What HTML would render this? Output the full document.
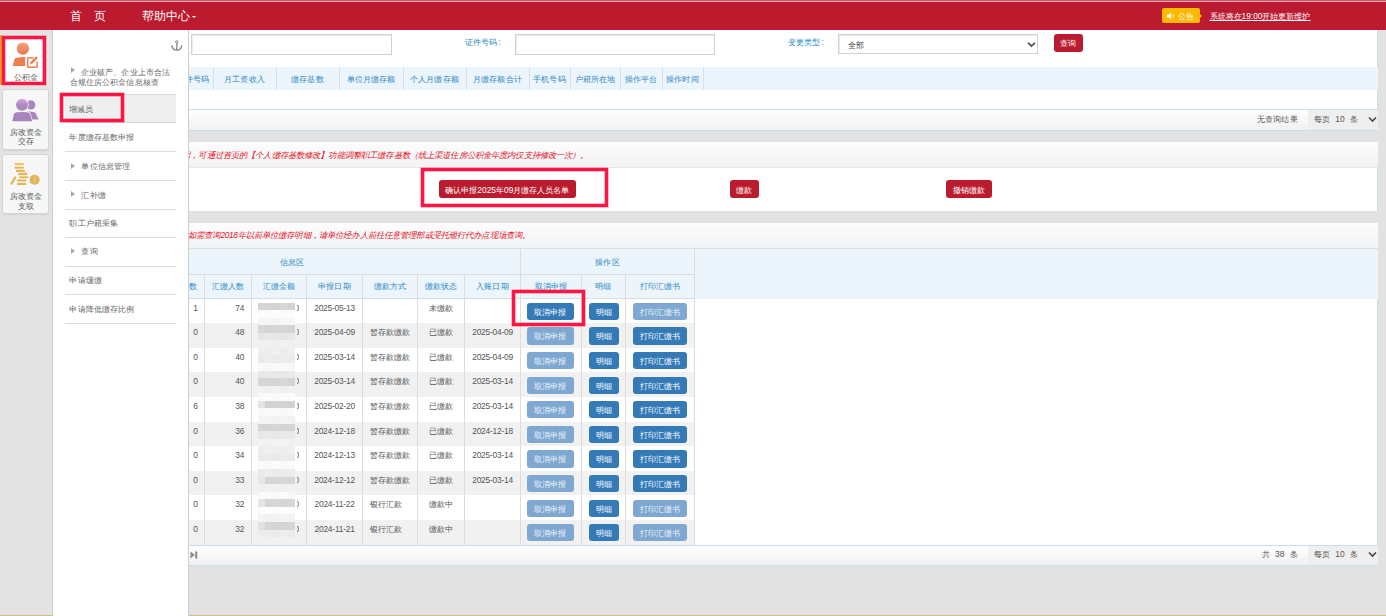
<!DOCTYPE html><html><head><meta charset="utf-8"><style>html,body{margin:0;padding:0;}
body{width:1386px;height:616px;overflow:hidden;position:relative;background:#e2e2e2;font-family:"Liberation Sans",sans-serif;}
.a{position:absolute;box-sizing:border-box;}
.t{letter-spacing:0.13px;white-space:nowrap;font-size:8.4px;line-height:12px;color:#555;}
.d{white-space:nowrap;font-size:8.4px;line-height:12px;color:#555;}
.h{letter-spacing:0.13px;white-space:nowrap;font-size:8.4px;line-height:12px;color:#2b8bc6;text-align:center;}
.bb{background:#337ab7;border-radius:3px;color:#fff;font-size:8.4px;line-height:19px;text-align:center;white-space:nowrap;}
.bb.dis{background:#7ea8d1;color:#eef3f9;}
.rb{background:#bb1b2e;border-radius:3px;color:#fff;font-size:8.4px;line-height:20.2px;text-align:center;white-space:nowrap;}
.sep{background:#e1e1e1;height:1px;}
.notice{letter-spacing:0.13px;color:#e8101a;font-style:italic;font-size:8.4px;white-space:nowrap;line-height:12px;}
.anno{border:3px solid #fe1543;box-shadow:0 0 0 0.5px rgba(254,21,67,0.6), inset 0 0 0 0.5px rgba(254,21,67,0.6);}
.pg{background:linear-gradient(#ffffff,#f1f1f1);border-top:1px solid #c7dfeb;border-bottom:1px solid #c7dfeb;}
.inp{background:#fff;border:1px solid #d2d2d2;border-radius:0;box-shadow:inset 1px 1px 0 #ececec;}
</style></head><body>
<!-- top line + header -->
<div class="a" style="left:0;top:0;width:1386px;height:1px;background:#c9566a"></div>
<div class="a" style="left:0;top:1px;width:1386px;height:1px;background:#e6aab3"></div>
<div class="a" style="left:0;top:2px;width:1386px;height:28px;background:#bc1a2e"></div>
<div class="a" style="left:70px;top:8px;font-size:12.4px;line-height:16px;color:#fff;white-space:nowrap">首</div>
<div class="a" style="left:94px;top:8px;font-size:12.4px;line-height:16px;color:#fff;white-space:nowrap">页</div>
<div class="a" style="left:142px;top:8px;font-size:12.4px;line-height:16px;color:#fff;white-space:nowrap">帮助中心</div>
<div class="a" style="left:192px;top:15.8px;width:0;height:0;border-left:2.3px solid transparent;border-right:2.3px solid transparent;border-top:2.3px solid #fff"></div>
<!-- notice badge -->
<div class="a" style="left:1162px;top:8px;width:38px;height:15px;background:#fdb800;border-radius:2px"></div>
<div class="a" style="left:1200px;top:13.5px;width:0;height:0;border-top:2px solid transparent;border-bottom:2px solid transparent;border-left:2.5px solid #fdb800"></div>
<svg class="a" style="left:1166px;top:11px" width="10" height="10" viewBox="0 0 10 10"><path d="M1 3.5h1.8L5 1.8v6.4L2.8 6.5H1z" fill="#fff"/><path d="M6.6 3.2a2.4 2.4 0 0 1 0 3.6" stroke="#fff" stroke-width="0.8" fill="none"/></svg>
<div class="a" style="left:1178px;top:9.5px;font-size:8.4px;line-height:12px;color:#fff;white-space:nowrap">公告</div>
<div class="a" style="left:1209.5px;top:10px;font-size:8.4px;line-height:12px;color:#fff;white-space:nowrap;text-decoration:underline">系统将在19:00开始更新维护</div>

<!-- sidebar -->
<div class="a" style="left:0;top:30px;width:53px;height:586px;background:#e3e3e3;border-right:1px solid #cfcfcf"></div>
<div class="a" style="left:0;top:36px;width:51px;height:50px;background:linear-gradient(90deg,#fff 0,#fff 45px,#f0f0f0 46px,#e2e2e2 51px)"></div>
<div class="a" style="left:0;top:35px;width:2px;height:50px;background:#f0a21a"></div>
<div class="a" style="left:2px;top:89px;width:47px;height:61px;background:#f7f7f7;border:1px solid #d6d6d6;border-radius:3px;box-shadow:0 1px 1px rgba(0,0,0,0.08)"></div>
<div class="a" style="left:2px;top:154px;width:47px;height:60px;background:#f7f7f7;border:1px solid #d6d6d6;border-radius:3px;box-shadow:0 1px 1px rgba(0,0,0,0.08)"></div>
<!-- icon 1 person edit -->
<svg class="a" style="left:10px;top:40px" width="30" height="30" viewBox="0 0 30 30">
 <defs><linearGradient id="og" x1="0" y1="0" x2="0" y2="1"><stop offset="0" stop-color="#f5a27e"/><stop offset="1" stop-color="#eb7650"/></linearGradient>
 <linearGradient id="pg" x1="0" y1="0" x2="0" y2="1"><stop offset="0" stop-color="#dcaae8"/><stop offset="0.5" stop-color="#ad8bc2"/><stop offset="1" stop-color="#a886bd"/></linearGradient></defs>
 <circle cx="12.9" cy="8.6" r="6.2" fill="url(#og)"/>
 <path d="M2.7 26 L4.5 19.2 Q4.9 18 6.4 17.8 L15.1 16.8 L15.1 26 Z" fill="#ee7d52"/>
 <path d="M23.6 17.7 H18.6 Q17.7 17.7 17.7 18.6 V26.4 Q17.7 27.3 18.6 27.3 H26.2 Q27.1 27.3 27.1 26.4 V21.4" fill="none" stroke="#ee7d52" stroke-width="1.5"/>
 <path d="M20 24.4 L20.7 21.7 L26.1 16.3 L27.9 18.1 L22.5 23.5 Z" fill="#ee7d52"/>
</svg>
<div class="a t" style="left:13.5px;top:71px;color:#555">公积金</div>
<!-- icon 2 persons -->
<svg class="a" style="left:8px;top:94px" width="34" height="32" viewBox="0 0 34 32">
 <circle cx="22.8" cy="10.9" r="4.6" fill="#a987bf"/>
 <path d="M19.5 17.6 Q26 17.3 27.6 19.2 L30.7 25.5 L23 25.5 Z" fill="#a987bf"/>
 <circle cx="14" cy="10.7" r="6.7" fill="#f7f7f7"/>
 <circle cx="14" cy="10.7" r="6" fill="url(#pg)"/>
 <path d="M3.4 28 L5.4 19.5 Q6 17.8 9 17.6 Q14 17.1 19 17.6 Q22 17.8 22.6 19.5 L25 28 Z" fill="#f7f7f7"/>
 <path d="M4.2 27.3 L6 19.9 Q6.5 18.5 9 18.3 Q14 17.8 19 18.3 Q21.5 18.5 22 19.9 L24.2 27.3 Z" fill="#a886bd"/>
</svg>
<div class="a t" style="left:9.6px;top:125.5px;color:#555">房改资金</div>
<div class="a t" style="left:17.7px;top:134.5px;color:#555">交存</div>
<!-- icon 3 coins -->
<svg class="a" style="left:8px;top:160px" width="34" height="28" viewBox="0 0 34 28">
 <g fill="#e3b456">
  <rect x="6.4" y="3.1" width="9.6" height="2" rx="1" fill="#f0c66c"/>
  <rect x="6.4" y="6.7" width="9.6" height="2" rx="1"/>
  <rect x="7.7" y="9.9" width="9.4" height="2" rx="1"/>
  <rect x="10" y="13.1" width="9.4" height="2" rx="1"/>
  <rect x="11.1" y="16.3" width="9.2" height="2" rx="1"/>
  <rect x="8.9" y="19.5" width="9.4" height="2" rx="1"/>
  <rect x="8.9" y="23" width="9.4" height="2" rx="1"/>
  <path d="M3.4 23.6 L7.3 17.5" stroke="#e3b456" stroke-width="2.3" stroke-linecap="round"/>
  <circle cx="26.6" cy="19.8" r="5"/>
 </g>
 <g fill="#f4e6c4" opacity="0.8">
  <rect x="7" y="5.2" width="8.6" height="1.4"/>
  <rect x="8" y="8.7" width="8.6" height="1.2"/>
  <rect x="10.5" y="11.9" width="8.6" height="1.2"/>
  <rect x="11.5" y="15.1" width="8.6" height="1.2"/>
  <rect x="9.5" y="21.5" width="8.6" height="1.4"/>
 </g>
 <path d="M26.8 16.6 L27.4 17.8 L26.2 19.4 L27.4 21 L26.6 22.8" stroke="#f1ddb0" stroke-width="0.8" fill="none"/>
</svg>
<div class="a t" style="left:9.6px;top:190px;color:#555">房改资金</div>
<div class="a t" style="left:17.7px;top:199.5px;color:#555">支取</div>

<!-- main panel 1 -->
<div class="a" style="left:188px;top:30px;width:1190px;height:101px;background:#fff;border-right:1px solid #c7dfeb"></div>
<div class="a inp" style="left:191px;top:34px;width:201px;height:21px"></div>
<div class="a h" style="left:464.5px;top:35.7px;text-align:left">证件号码<span style="margin-left:1.2px">:</span></div>
<div class="a inp" style="left:515px;top:34px;width:200px;height:21px"></div>
<div class="a h" style="left:787.8px;top:35.7px;text-align:left">变更类型<span style="margin-left:1.2px">:</span></div>
<div class="a inp" style="left:838px;top:34px;width:200px;height:20px"></div>
<div class="a t" style="left:848px;top:38.6px;color:#444">全部</div>
<svg class="a" style="left:1027px;top:40.5px" width="9" height="7" viewBox="0 0 9 7"><path d="M1 1.8 L4.5 5 L8 1.8" stroke="#555" stroke-width="1.7" fill="none"/></svg>
<div class="a rb" style="left:1054px;top:34px;width:28.6px;height:18px;line-height:19.5px">查询</div>
<!-- header row -->
<div class="a" style="left:188px;top:67px;width:1190px;height:23px;background:#ecf4fc"></div>
<div id="hdr1"></div>
<div class="a" style="left:188px;top:109.3px;width:1190px;height:21.5px" ></div>
<div class="a pg" style="left:188px;top:109.3px;width:1190px;height:21.6px"></div>
<div class="a t" style="left:1257px;top:112.6px;color:#555">无查询结果</div>
<div class="a" style="left:1308px;top:110.3px;width:70px;height:19.6px;background:#efefef"></div>
<div class="a t" style="left:1314px;top:112.6px;color:#555">每页&nbsp;&nbsp;10&nbsp;&nbsp;条</div>
<svg class="a" style="left:1367.5px;top:116px" width="9" height="7" viewBox="0 0 9 7"><path d="M1 1.5 L4.5 5 L8 1.5" stroke="#444" stroke-width="1.6" fill="none"/></svg>

<!-- panel 2 -->
<div class="a" style="left:188px;top:141.5px;width:1190px;height:69.5px;background:#fff;border-right:1px solid #c7dfeb"></div>
<div class="a" style="left:188px;top:141.5px;width:1190px;height:26.3px;background:linear-gradient(#fdfdfd,#f1f2f4);border-bottom:1px solid #e6e6e6"></div>
<div class="a notice" style="left:174px;top:148.5px">数据，可通过首页的【个人缴存基数修改】功能调整职工缴存基数（线上渠道住房公积金年度内仅支持修改一次）。</div>
<div class="a rb" style="left:439.1px;top:180.2px;width:136.5px;height:18.1px">确认申报2025年09月缴存人员名单</div>
<div class="a rb" style="left:730.2px;top:180.1px;width:28.6px;height:18.4px">缴款</div>
<div class="a rb" style="left:946px;top:180.1px;width:45.5px;height:18.4px">撤销缴款</div>
<div class="a anno" style="left:420.9px;top:168.3px;width:187.1px;height:38.4px"></div>

<!-- panel 3 -->
<div class="a" style="left:188px;top:222.5px;width:1190px;height:342.5px;background:#fff;border-right:1px solid #c7dfeb"></div>
<div class="a" style="left:188px;top:222.5px;width:1190px;height:26.3px;background:linear-gradient(#fdfdfd,#f1f2f4);border-bottom:1px solid #dedede"></div>
<div class="a notice" style="left:188px;top:229px">如需查询<span style="letter-spacing:-0.4px">2018</span>年以前单位缴存明细，请单位经办人前往任意管理部或受托银行代办点现场查询。</div>
<div class="a" style="left:188px;top:249.2px;width:1190px;height:49.4px;background:#ecf4fc"></div>
<div class="a" style="left:188px;top:274px;width:507px;height:1px;background:#dcdcdc"></div>
<div class="a" style="left:520px;top:249.2px;width:1px;height:25px;background:#dcdcdc"></div>
<div class="a" style="left:694px;top:249.2px;width:1px;height:25px;background:#dcdcdc"></div>
<div class="a" style="left:188px;top:298px;width:507px;height:1px;background:#dcdcdc"></div>
<div class="a h" style="left:192px;top:255.5px;width:200px">信息区</div>
<div class="a h" style="left:507.5px;top:255.5px;width:200px">操作区</div>

<div class="a pg" style="left:188px;top:544.6px;width:1190px;height:21px"></div>
<svg class="a" style="left:190px;top:550.5px" width="8" height="8" viewBox="0 0 8 8"><path d="M0.5 0.5 L4.8 4 L0.5 7.5 Z" fill="#888"/><rect x="5.2" y="0.5" width="2" height="7" fill="#888"/></svg>
<div class="a t" style="left:1262px;top:547.6px;color:#555">共&nbsp;&nbsp;38&nbsp;&nbsp;条</div>
<div class="a" style="left:1308px;top:545.6px;width:70px;height:18.6px;background:#efefef"></div>
<div class="a t" style="left:1314px;top:547.6px;color:#555">每页&nbsp;&nbsp;10&nbsp;&nbsp;条</div>
<svg class="a" style="left:1367.5px;top:551px" width="9" height="7" viewBox="0 0 9 7"><path d="M1 1.5 L4.5 5 L8 1.5" stroke="#444" stroke-width="1.6" fill="none"/></svg>
<div class="a" style="left:0;top:615px;width:1386px;height:1px;background:#d9bc8c"></div>

<div class="a " style="left:188px;top:323.2px;width:506.5px;height:24.6px;background:#f1f1f1"></div>
<div class="a " style="left:188px;top:372.4px;width:506.5px;height:24.6px;background:#f1f1f1"></div>
<div class="a " style="left:188px;top:421.6px;width:506.5px;height:24.6px;background:#f1f1f1"></div>
<div class="a " style="left:188px;top:470.8px;width:506.5px;height:24.6px;background:#f1f1f1"></div>
<div class="a " style="left:188px;top:520.0px;width:506.5px;height:24.6px;background:#f1f1f1"></div>
<div class="a d" style="left:180.5px;top:301.6px;width:30px;text-align:center;">1</div>
<div class="a d" style="left:204.5px;top:301.6px;width:40px;text-align:right">74</div>
<div class="a d" style="left:296.6px;top:301.6px;width:2.8px;overflow:hidden"><span style="margin-left:-2px">0</span></div>
<div class="a d" style="left:307.5px;top:301.6px;width:54px;text-align:center;letter-spacing:-0.2px;text-indent:0.2px">2025-05-13</div>
<div class="a d" style="left:418.0px;top:301.6px;width:46px;text-align:center;">未缴款</div>
<div class="a bb" style="left:527.1px;top:302.8px;width:46.8px;height:17.2px;">取消申报</div>
<div class="a bb" style="left:588.6px;top:302.8px;width:30px;height:17.2px;">明细</div>
<div class="a bb dis" style="left:633px;top:302.8px;width:54.2px;height:17.2px;">打印汇缴书</div>
<div class="a d" style="left:180.5px;top:326.20000000000005px;width:30px;text-align:center;">0</div>
<div class="a d" style="left:204.5px;top:326.20000000000005px;width:40px;text-align:right">48</div>
<div class="a d" style="left:296.6px;top:326.20000000000005px;width:2.8px;overflow:hidden"><span style="margin-left:-2px">0</span></div>
<div class="a d" style="left:307.5px;top:326.20000000000005px;width:54px;text-align:center;letter-spacing:-0.2px;text-indent:0.2px">2025-04-09</div>
<div class="a d" style="left:370px;top:326.20000000000005px;">暂存款缴款</div>
<div class="a d" style="left:418.0px;top:326.20000000000005px;width:46px;text-align:center;">已缴款</div>
<div class="a d" style="left:465.5px;top:326.20000000000005px;width:54px;text-align:center;letter-spacing:-0.2px;text-indent:0.2px">2025-04-09</div>
<div class="a bb dis" style="left:527.1px;top:327.4px;width:46.8px;height:17.2px;">取消申报</div>
<div class="a bb" style="left:588.6px;top:327.4px;width:30px;height:17.2px;">明细</div>
<div class="a bb" style="left:633px;top:327.4px;width:54.2px;height:17.2px;">打印汇缴书</div>
<div class="a d" style="left:180.5px;top:350.8px;width:30px;text-align:center;">0</div>
<div class="a d" style="left:204.5px;top:350.8px;width:40px;text-align:right">40</div>
<div class="a d" style="left:296.6px;top:350.8px;width:2.8px;overflow:hidden"><span style="margin-left:-2px">0</span></div>
<div class="a d" style="left:307.5px;top:350.8px;width:54px;text-align:center;letter-spacing:-0.2px;text-indent:0.2px">2025-03-14</div>
<div class="a d" style="left:370px;top:350.8px;">暂存款缴款</div>
<div class="a d" style="left:418.0px;top:350.8px;width:46px;text-align:center;">已缴款</div>
<div class="a d" style="left:465.5px;top:350.8px;width:54px;text-align:center;letter-spacing:-0.2px;text-indent:0.2px">2025-04-09</div>
<div class="a bb dis" style="left:527.1px;top:352.0px;width:46.8px;height:17.2px;">取消申报</div>
<div class="a bb" style="left:588.6px;top:352.0px;width:30px;height:17.2px;">明细</div>
<div class="a bb" style="left:633px;top:352.0px;width:54.2px;height:17.2px;">打印汇缴书</div>
<div class="a d" style="left:180.5px;top:375.40000000000003px;width:30px;text-align:center;">0</div>
<div class="a d" style="left:204.5px;top:375.40000000000003px;width:40px;text-align:right">40</div>
<div class="a d" style="left:296.6px;top:375.40000000000003px;width:2.8px;overflow:hidden"><span style="margin-left:-2px">0</span></div>
<div class="a d" style="left:307.5px;top:375.40000000000003px;width:54px;text-align:center;letter-spacing:-0.2px;text-indent:0.2px">2025-03-14</div>
<div class="a d" style="left:370px;top:375.40000000000003px;">暂存款缴款</div>
<div class="a d" style="left:418.0px;top:375.40000000000003px;width:46px;text-align:center;">已缴款</div>
<div class="a d" style="left:465.5px;top:375.40000000000003px;width:54px;text-align:center;letter-spacing:-0.2px;text-indent:0.2px">2025-03-14</div>
<div class="a bb dis" style="left:527.1px;top:376.6px;width:46.8px;height:17.2px;">取消申报</div>
<div class="a bb" style="left:588.6px;top:376.6px;width:30px;height:17.2px;">明细</div>
<div class="a bb" style="left:633px;top:376.6px;width:54.2px;height:17.2px;">打印汇缴书</div>
<div class="a d" style="left:180.5px;top:400.0px;width:30px;text-align:center;">6</div>
<div class="a d" style="left:204.5px;top:400.0px;width:40px;text-align:right">38</div>
<div class="a d" style="left:296.6px;top:400.0px;width:2.8px;overflow:hidden"><span style="margin-left:-2px">0</span></div>
<div class="a d" style="left:307.5px;top:400.0px;width:54px;text-align:center;letter-spacing:-0.2px;text-indent:0.2px">2025-02-20</div>
<div class="a d" style="left:370px;top:400.0px;">暂存款缴款</div>
<div class="a d" style="left:418.0px;top:400.0px;width:46px;text-align:center;">已缴款</div>
<div class="a d" style="left:465.5px;top:400.0px;width:54px;text-align:center;letter-spacing:-0.2px;text-indent:0.2px">2025-03-14</div>
<div class="a bb dis" style="left:527.1px;top:401.2px;width:46.8px;height:17.2px;">取消申报</div>
<div class="a bb" style="left:588.6px;top:401.2px;width:30px;height:17.2px;">明细</div>
<div class="a bb" style="left:633px;top:401.2px;width:54.2px;height:17.2px;">打印汇缴书</div>
<div class="a d" style="left:180.5px;top:424.6px;width:30px;text-align:center;">0</div>
<div class="a d" style="left:204.5px;top:424.6px;width:40px;text-align:right">36</div>
<div class="a d" style="left:296.6px;top:424.6px;width:2.8px;overflow:hidden"><span style="margin-left:-2px">0</span></div>
<div class="a d" style="left:307.5px;top:424.6px;width:54px;text-align:center;letter-spacing:-0.2px;text-indent:0.2px">2024-12-18</div>
<div class="a d" style="left:370px;top:424.6px;">暂存款缴款</div>
<div class="a d" style="left:418.0px;top:424.6px;width:46px;text-align:center;">已缴款</div>
<div class="a d" style="left:465.5px;top:424.6px;width:54px;text-align:center;letter-spacing:-0.2px;text-indent:0.2px">2024-12-18</div>
<div class="a bb dis" style="left:527.1px;top:425.8px;width:46.8px;height:17.2px;">取消申报</div>
<div class="a bb" style="left:588.6px;top:425.8px;width:30px;height:17.2px;">明细</div>
<div class="a bb" style="left:633px;top:425.8px;width:54.2px;height:17.2px;">打印汇缴书</div>
<div class="a d" style="left:180.5px;top:449.20000000000005px;width:30px;text-align:center;">0</div>
<div class="a d" style="left:204.5px;top:449.20000000000005px;width:40px;text-align:right">34</div>
<div class="a d" style="left:296.6px;top:449.20000000000005px;width:2.8px;overflow:hidden"><span style="margin-left:-2px">0</span></div>
<div class="a d" style="left:307.5px;top:449.20000000000005px;width:54px;text-align:center;letter-spacing:-0.2px;text-indent:0.2px">2024-12-13</div>
<div class="a d" style="left:370px;top:449.20000000000005px;">暂存款缴款</div>
<div class="a d" style="left:418.0px;top:449.20000000000005px;width:46px;text-align:center;">已缴款</div>
<div class="a d" style="left:465.5px;top:449.20000000000005px;width:54px;text-align:center;letter-spacing:-0.2px;text-indent:0.2px">2025-03-14</div>
<div class="a bb dis" style="left:527.1px;top:450.4px;width:46.8px;height:17.2px;">取消申报</div>
<div class="a bb" style="left:588.6px;top:450.4px;width:30px;height:17.2px;">明细</div>
<div class="a bb" style="left:633px;top:450.4px;width:54.2px;height:17.2px;">打印汇缴书</div>
<div class="a d" style="left:180.5px;top:473.80000000000007px;width:30px;text-align:center;">0</div>
<div class="a d" style="left:204.5px;top:473.80000000000007px;width:40px;text-align:right">33</div>
<div class="a d" style="left:296.6px;top:473.80000000000007px;width:2.8px;overflow:hidden"><span style="margin-left:-2px">0</span></div>
<div class="a d" style="left:307.5px;top:473.80000000000007px;width:54px;text-align:center;letter-spacing:-0.2px;text-indent:0.2px">2024-12-12</div>
<div class="a d" style="left:370px;top:473.80000000000007px;">暂存款缴款</div>
<div class="a d" style="left:418.0px;top:473.80000000000007px;width:46px;text-align:center;">已缴款</div>
<div class="a d" style="left:465.5px;top:473.80000000000007px;width:54px;text-align:center;letter-spacing:-0.2px;text-indent:0.2px">2025-03-14</div>
<div class="a bb dis" style="left:527.1px;top:475.0px;width:46.8px;height:17.2px;">取消申报</div>
<div class="a bb" style="left:588.6px;top:475.0px;width:30px;height:17.2px;">明细</div>
<div class="a bb" style="left:633px;top:475.0px;width:54.2px;height:17.2px;">打印汇缴书</div>
<div class="a d" style="left:180.5px;top:498.40000000000003px;width:30px;text-align:center;">0</div>
<div class="a d" style="left:204.5px;top:498.40000000000003px;width:40px;text-align:right">32</div>
<div class="a d" style="left:296.6px;top:498.40000000000003px;width:2.8px;overflow:hidden"><span style="margin-left:-2px">0</span></div>
<div class="a d" style="left:307.5px;top:498.40000000000003px;width:54px;text-align:center;letter-spacing:-0.2px;text-indent:0.2px">2024-11-22</div>
<div class="a d" style="left:370px;top:498.40000000000003px;">银行汇款</div>
<div class="a d" style="left:418.0px;top:498.40000000000003px;width:46px;text-align:center;">缴款中</div>
<div class="a bb dis" style="left:527.1px;top:499.6px;width:46.8px;height:17.2px;">取消申报</div>
<div class="a bb" style="left:588.6px;top:499.6px;width:30px;height:17.2px;">明细</div>
<div class="a bb dis" style="left:633px;top:499.6px;width:54.2px;height:17.2px;">打印汇缴书</div>
<div class="a d" style="left:180.5px;top:523.0px;width:30px;text-align:center;">0</div>
<div class="a d" style="left:204.5px;top:523.0px;width:40px;text-align:right">32</div>
<div class="a d" style="left:296.6px;top:523.0px;width:2.8px;overflow:hidden"><span style="margin-left:-2px">0</span></div>
<div class="a d" style="left:307.5px;top:523.0px;width:54px;text-align:center;letter-spacing:-0.2px;text-indent:0.2px">2024-11-21</div>
<div class="a d" style="left:370px;top:523.0px;">银行汇款</div>
<div class="a d" style="left:418.0px;top:523.0px;width:46px;text-align:center;">缴款中</div>
<div class="a bb dis" style="left:527.1px;top:524.2px;width:46.8px;height:17.2px;">取消申报</div>
<div class="a bb" style="left:588.6px;top:524.2px;width:30px;height:17.2px;">明细</div>
<div class="a bb dis" style="left:633px;top:524.2px;width:54.2px;height:17.2px;">打印汇缴书</div>
<div class="a " style="left:204px;top:274.3px;width:1px;height:270.3px;background:#dcdcdc"></div>
<div class="a " style="left:251px;top:274.3px;width:1px;height:270.3px;background:#dcdcdc"></div>
<div class="a " style="left:306px;top:274.3px;width:1px;height:270.3px;background:#dcdcdc"></div>
<div class="a " style="left:362px;top:274.3px;width:1px;height:270.3px;background:#dcdcdc"></div>
<div class="a " style="left:417px;top:274.3px;width:1px;height:270.3px;background:#dcdcdc"></div>
<div class="a " style="left:464px;top:274.3px;width:1px;height:270.3px;background:#dcdcdc"></div>
<div class="a " style="left:520px;top:274.3px;width:1px;height:270.3px;background:#dcdcdc"></div>
<div class="a " style="left:581px;top:274.3px;width:1px;height:270.3px;background:#dcdcdc"></div>
<div class="a " style="left:625px;top:274.3px;width:1px;height:270.3px;background:#dcdcdc"></div>
<div class="a " style="left:694px;top:274.3px;width:1px;height:270.3px;background:#dcdcdc"></div>
<div class="a " style="left:213px;top:67px;width:1px;height:23px;background:#d9dfe6"></div>
<div class="a " style="left:276px;top:67px;width:1px;height:23px;background:#d9dfe6"></div>
<div class="a " style="left:339px;top:67px;width:1px;height:23px;background:#d9dfe6"></div>
<div class="a " style="left:403px;top:67px;width:1px;height:23px;background:#d9dfe6"></div>
<div class="a " style="left:466px;top:67px;width:1px;height:23px;background:#d9dfe6"></div>
<div class="a " style="left:529px;top:67px;width:1px;height:23px;background:#d9dfe6"></div>
<div class="a " style="left:570px;top:67px;width:1px;height:23px;background:#d9dfe6"></div>
<div class="a " style="left:620px;top:67px;width:1px;height:23px;background:#d9dfe6"></div>
<div class="a " style="left:662px;top:67px;width:1px;height:23px;background:#d9dfe6"></div>
<div class="a " style="left:703px;top:67px;width:1px;height:23px;background:#d9dfe6"></div>
<div class="a h" style="left:204.5px;top:73px;width:80px;text-align:center;">月工资收入</div>
<div class="a h" style="left:267.5px;top:73px;width:80px;text-align:center;">缴存基数</div>
<div class="a h" style="left:331.0px;top:73px;width:80px;text-align:center;">单位月缴存额</div>
<div class="a h" style="left:394.5px;top:73px;width:80px;text-align:center;">个人月缴存额</div>
<div class="a h" style="left:457.5px;top:73px;width:80px;text-align:center;">月缴存额合计</div>
<div class="a h" style="left:509.5px;top:73px;width:80px;text-align:center;">手机号码</div>
<div class="a h" style="left:555.0px;top:73px;width:80px;text-align:center;">户籍所在地</div>
<div class="a h" style="left:601.0px;top:73px;width:80px;text-align:center;">操作平台</div>
<div class="a h" style="left:642.5px;top:73px;width:80px;text-align:center;">操作时间</div>
<div class="a h" style="left:153.0px;top:73px;width:80px;text-align:center;">证件号码</div>
<div class="a h" style="left:149.5px;top:280px;width:80px;text-align:center;">人数</div>
<div class="a h" style="left:188.0px;top:280px;width:80px;text-align:center;">汇缴人数</div>
<div class="a h" style="left:239.0px;top:280px;width:80px;text-align:center;">汇缴金额</div>
<div class="a h" style="left:294.5px;top:280px;width:80px;text-align:center;">申报日期</div>
<div class="a h" style="left:350.0px;top:280px;width:80px;text-align:center;">缴款方式</div>
<div class="a h" style="left:401.0px;top:280px;width:80px;text-align:center;">缴款状态</div>
<div class="a h" style="left:452.5px;top:280px;width:80px;text-align:center;">入账日期</div>
<div class="a h" style="left:511.0px;top:280px;width:80px;text-align:center;">取消申报</div>
<div class="a h" style="left:563.5px;top:280px;width:80px;text-align:center;">明细</div>
<div class="a h" style="left:620.0px;top:280px;width:80px;text-align:center;">打印汇缴书</div>
<div class="a " style="left:258px;top:302.5px;width:7.4px;height:7.57px;background:rgb(215,213,211)"></div>
<div class="a " style="left:265.4px;top:302.5px;width:7.4px;height:7.57px;background:rgb(212,213,215)"></div>
<div class="a " style="left:272.8px;top:302.5px;width:7.4px;height:7.57px;background:rgb(211,211,209)"></div>
<div class="a " style="left:280.2px;top:302.5px;width:7.4px;height:7.57px;background:rgb(213,214,216)"></div>
<div class="a " style="left:287.6px;top:302.5px;width:7.4px;height:7.57px;background:rgb(211,211,211)"></div>
<div class="a " style="left:258px;top:310.07px;width:7.4px;height:7.57px;background:rgb(251,252,254)"></div>
<div class="a " style="left:265.4px;top:310.07px;width:7.4px;height:7.57px;background:rgb(250,250,248)"></div>
<div class="a " style="left:272.8px;top:310.07px;width:7.4px;height:7.57px;background:rgb(252,253,255)"></div>
<div class="a " style="left:280.2px;top:310.07px;width:7.4px;height:7.57px;background:rgb(250,250,250)"></div>
<div class="a " style="left:287.6px;top:310.07px;width:7.4px;height:7.57px;background:rgb(254,252,250)"></div>
<div class="a " style="left:258px;top:317.64px;width:7.4px;height:7.57px;background:rgb(244,244,242)"></div>
<div class="a " style="left:265.4px;top:317.64px;width:7.4px;height:7.57px;background:rgb(246,247,249)"></div>
<div class="a " style="left:272.8px;top:317.64px;width:7.4px;height:7.57px;background:rgb(244,244,244)"></div>
<div class="a " style="left:280.2px;top:317.64px;width:7.4px;height:7.57px;background:rgb(248,246,244)"></div>
<div class="a " style="left:287.6px;top:317.64px;width:7.4px;height:7.57px;background:rgb(245,246,248)"></div>
<div class="a " style="left:258px;top:325.21px;width:7.4px;height:7.57px;background:rgb(214,215,217)"></div>
<div class="a " style="left:265.4px;top:325.21px;width:7.4px;height:7.57px;background:rgb(212,212,212)"></div>
<div class="a " style="left:272.8px;top:325.21px;width:7.4px;height:7.57px;background:rgb(216,214,212)"></div>
<div class="a " style="left:280.2px;top:325.21px;width:7.4px;height:7.57px;background:rgb(213,214,216)"></div>
<div class="a " style="left:287.6px;top:325.21px;width:7.4px;height:7.57px;background:rgb(212,212,210)"></div>
<div class="a " style="left:258px;top:332.78px;width:7.4px;height:7.57px;background:rgb(229,229,229)"></div>
<div class="a " style="left:265.4px;top:332.78px;width:7.4px;height:7.57px;background:rgb(233,231,229)"></div>
<div class="a " style="left:272.8px;top:332.78px;width:7.4px;height:7.57px;background:rgb(230,231,233)"></div>
<div class="a " style="left:280.2px;top:332.78px;width:7.4px;height:7.57px;background:rgb(229,229,227)"></div>
<div class="a " style="left:287.6px;top:332.78px;width:7.4px;height:7.57px;background:rgb(231,232,234)"></div>
<div class="a " style="left:258px;top:340.35px;width:7.4px;height:7.57px;background:rgb(243,241,239)"></div>
<div class="a " style="left:265.4px;top:340.35px;width:7.4px;height:7.57px;background:rgb(240,241,243)"></div>
<div class="a " style="left:272.8px;top:340.35px;width:7.4px;height:7.57px;background:rgb(239,239,237)"></div>
<div class="a " style="left:280.2px;top:340.35px;width:7.4px;height:7.57px;background:rgb(241,242,244)"></div>
<div class="a " style="left:287.6px;top:340.35px;width:7.4px;height:7.57px;background:rgb(239,239,239)"></div>
<div class="a " style="left:258px;top:347.92px;width:7.4px;height:7.57px;background:rgb(238,239,241)"></div>
<div class="a " style="left:265.4px;top:347.92px;width:7.4px;height:7.57px;background:rgb(237,237,235)"></div>
<div class="a " style="left:272.8px;top:347.92px;width:7.4px;height:7.57px;background:rgb(239,240,242)"></div>
<div class="a " style="left:280.2px;top:347.92px;width:7.4px;height:7.57px;background:rgb(237,237,237)"></div>
<div class="a " style="left:287.6px;top:347.92px;width:7.4px;height:7.57px;background:rgb(241,239,237)"></div>
<div class="a " style="left:258px;top:355.49px;width:7.4px;height:7.57px;background:rgb(234,234,232)"></div>
<div class="a " style="left:265.4px;top:355.49px;width:7.4px;height:7.57px;background:rgb(236,237,239)"></div>
<div class="a " style="left:272.8px;top:355.49px;width:7.4px;height:7.57px;background:rgb(234,234,234)"></div>
<div class="a " style="left:280.2px;top:355.49px;width:7.4px;height:7.57px;background:rgb(238,236,234)"></div>
<div class="a " style="left:287.6px;top:355.49px;width:7.4px;height:7.57px;background:rgb(235,236,238)"></div>
<div class="a " style="left:258px;top:363.06px;width:7.4px;height:7.57px;background:rgb(249,250,252)"></div>
<div class="a " style="left:265.4px;top:363.06px;width:7.4px;height:7.57px;background:rgb(247,247,247)"></div>
<div class="a " style="left:272.8px;top:363.06px;width:7.4px;height:7.57px;background:rgb(251,249,247)"></div>
<div class="a " style="left:280.2px;top:363.06px;width:7.4px;height:7.57px;background:rgb(248,249,251)"></div>
<div class="a " style="left:287.6px;top:363.06px;width:7.4px;height:7.57px;background:rgb(247,247,245)"></div>
<div class="a " style="left:258px;top:370.63px;width:7.4px;height:7.57px;background:rgb(231,231,231)"></div>
<div class="a " style="left:265.4px;top:370.63px;width:7.4px;height:7.57px;background:rgb(235,233,231)"></div>
<div class="a " style="left:272.8px;top:370.63px;width:7.4px;height:7.57px;background:rgb(232,233,235)"></div>
<div class="a " style="left:280.2px;top:370.63px;width:7.4px;height:7.57px;background:rgb(231,231,229)"></div>
<div class="a " style="left:287.6px;top:370.63px;width:7.4px;height:7.57px;background:rgb(233,234,236)"></div>
<div class="a " style="left:258px;top:378.2px;width:7.4px;height:7.57px;background:rgb(216,214,212)"></div>
<div class="a " style="left:265.4px;top:378.2px;width:7.4px;height:7.57px;background:rgb(213,214,216)"></div>
<div class="a " style="left:272.8px;top:378.2px;width:7.4px;height:7.57px;background:rgb(212,212,210)"></div>
<div class="a " style="left:280.2px;top:378.2px;width:7.4px;height:7.57px;background:rgb(214,215,217)"></div>
<div class="a " style="left:287.6px;top:378.2px;width:7.4px;height:7.57px;background:rgb(212,212,212)"></div>
<div class="a " style="left:258px;top:385.77px;width:7.4px;height:7.57px;background:rgb(240,241,243)"></div>
<div class="a " style="left:265.4px;top:385.77px;width:7.4px;height:7.57px;background:rgb(239,239,237)"></div>
<div class="a " style="left:272.8px;top:385.77px;width:7.4px;height:7.57px;background:rgb(241,242,244)"></div>
<div class="a " style="left:280.2px;top:385.77px;width:7.4px;height:7.57px;background:rgb(239,239,239)"></div>
<div class="a " style="left:287.6px;top:385.77px;width:7.4px;height:7.57px;background:rgb(243,241,239)"></div>
<div class="a " style="left:258px;top:393.34px;width:7.4px;height:7.57px;background:rgb(249,249,247)"></div>
<div class="a " style="left:265.4px;top:393.34px;width:7.4px;height:7.57px;background:rgb(251,252,254)"></div>
<div class="a " style="left:272.8px;top:393.34px;width:7.4px;height:7.57px;background:rgb(249,249,249)"></div>
<div class="a " style="left:280.2px;top:393.34px;width:7.4px;height:7.57px;background:rgb(253,251,249)"></div>
<div class="a " style="left:287.6px;top:393.34px;width:7.4px;height:7.57px;background:rgb(250,251,253)"></div>
<div class="a " style="left:258px;top:400.91px;width:7.4px;height:7.57px;background:rgb(226,227,229)"></div>
<div class="a " style="left:265.4px;top:400.91px;width:7.4px;height:7.57px;background:rgb(210,210,210)"></div>
<div class="a " style="left:272.8px;top:400.91px;width:7.4px;height:7.57px;background:rgb(214,212,210)"></div>
<div class="a " style="left:280.2px;top:400.91px;width:7.4px;height:7.57px;background:rgb(211,212,214)"></div>
<div class="a " style="left:287.6px;top:400.91px;width:7.4px;height:7.57px;background:rgb(210,210,208)"></div>
<div class="a " style="left:258px;top:408.48px;width:7.4px;height:7.57px;background:rgb(248,248,248)"></div>
<div class="a " style="left:265.4px;top:408.48px;width:7.4px;height:7.57px;background:rgb(252,250,248)"></div>
<div class="a " style="left:272.8px;top:408.48px;width:7.4px;height:7.57px;background:rgb(249,250,252)"></div>
<div class="a " style="left:280.2px;top:408.48px;width:7.4px;height:7.57px;background:rgb(248,248,246)"></div>
<div class="a " style="left:287.6px;top:408.48px;width:7.4px;height:7.57px;background:rgb(250,251,253)"></div>
<div class="a " style="left:258px;top:416.05px;width:7.4px;height:7.57px;background:rgb(246,244,242)"></div>
<div class="a " style="left:265.4px;top:416.05px;width:7.4px;height:7.57px;background:rgb(243,244,246)"></div>
<div class="a " style="left:272.8px;top:416.05px;width:7.4px;height:7.57px;background:rgb(242,242,240)"></div>
<div class="a " style="left:280.2px;top:416.05px;width:7.4px;height:7.57px;background:rgb(244,245,247)"></div>
<div class="a " style="left:287.6px;top:416.05px;width:7.4px;height:7.57px;background:rgb(242,242,242)"></div>
<div class="a " style="left:258px;top:423.62px;width:7.4px;height:7.57px;background:rgb(212,213,215)"></div>
<div class="a " style="left:265.4px;top:423.62px;width:7.4px;height:7.57px;background:rgb(211,211,209)"></div>
<div class="a " style="left:272.8px;top:423.62px;width:7.4px;height:7.57px;background:rgb(213,214,216)"></div>
<div class="a " style="left:280.2px;top:423.62px;width:7.4px;height:7.57px;background:rgb(211,211,211)"></div>
<div class="a " style="left:287.6px;top:423.62px;width:7.4px;height:7.57px;background:rgb(215,213,211)"></div>
<div class="a " style="left:258px;top:431.19px;width:7.4px;height:7.57px;background:rgb(232,232,230)"></div>
<div class="a " style="left:265.4px;top:431.19px;width:7.4px;height:7.57px;background:rgb(234,235,237)"></div>
<div class="a " style="left:272.8px;top:431.19px;width:7.4px;height:7.57px;background:rgb(232,232,232)"></div>
<div class="a " style="left:280.2px;top:431.19px;width:7.4px;height:7.57px;background:rgb(236,234,232)"></div>
<div class="a " style="left:287.6px;top:431.19px;width:7.4px;height:7.57px;background:rgb(233,234,236)"></div>
<div class="a " style="left:258px;top:438.76px;width:7.4px;height:7.57px;background:rgb(243,244,246)"></div>
<div class="a " style="left:265.4px;top:438.76px;width:7.4px;height:7.57px;background:rgb(241,241,241)"></div>
<div class="a " style="left:272.8px;top:438.76px;width:7.4px;height:7.57px;background:rgb(245,243,241)"></div>
<div class="a " style="left:280.2px;top:438.76px;width:7.4px;height:7.57px;background:rgb(242,243,245)"></div>
<div class="a " style="left:287.6px;top:438.76px;width:7.4px;height:7.57px;background:rgb(241,241,239)"></div>
<div class="a " style="left:258px;top:446.33px;width:7.4px;height:7.57px;background:rgb(237,237,237)"></div>
<div class="a " style="left:265.4px;top:446.33px;width:7.4px;height:7.57px;background:rgb(241,239,237)"></div>
<div class="a " style="left:272.8px;top:446.33px;width:7.4px;height:7.57px;background:rgb(238,239,241)"></div>
<div class="a " style="left:280.2px;top:446.33px;width:7.4px;height:7.57px;background:rgb(237,237,235)"></div>
<div class="a " style="left:287.6px;top:446.33px;width:7.4px;height:7.57px;background:rgb(239,240,242)"></div>
<div class="a " style="left:258px;top:453.9px;width:7.4px;height:7.57px;background:rgb(237,235,233)"></div>
<div class="a " style="left:265.4px;top:453.9px;width:7.4px;height:7.57px;background:rgb(234,235,237)"></div>
<div class="a " style="left:272.8px;top:453.9px;width:7.4px;height:7.57px;background:rgb(233,233,231)"></div>
<div class="a " style="left:280.2px;top:453.9px;width:7.4px;height:7.57px;background:rgb(235,236,238)"></div>
<div class="a " style="left:287.6px;top:453.9px;width:7.4px;height:7.57px;background:rgb(233,233,233)"></div>
<div class="a " style="left:258px;top:461.47px;width:7.4px;height:7.57px;background:rgb(250,251,253)"></div>
<div class="a " style="left:265.4px;top:461.47px;width:7.4px;height:7.57px;background:rgb(249,249,247)"></div>
<div class="a " style="left:272.8px;top:461.47px;width:7.4px;height:7.57px;background:rgb(251,252,254)"></div>
<div class="a " style="left:280.2px;top:461.47px;width:7.4px;height:7.57px;background:rgb(249,249,249)"></div>
<div class="a " style="left:287.6px;top:461.47px;width:7.4px;height:7.57px;background:rgb(253,251,249)"></div>
<div class="a " style="left:258px;top:469.04px;width:7.4px;height:7.57px;background:rgb(234,234,232)"></div>
<div class="a " style="left:265.4px;top:469.04px;width:7.4px;height:7.57px;background:rgb(236,237,239)"></div>
<div class="a " style="left:272.8px;top:469.04px;width:7.4px;height:7.57px;background:rgb(234,234,234)"></div>
<div class="a " style="left:280.2px;top:469.04px;width:7.4px;height:7.57px;background:rgb(238,236,234)"></div>
<div class="a " style="left:287.6px;top:469.04px;width:7.4px;height:7.57px;background:rgb(235,236,238)"></div>
<div class="a " style="left:258px;top:476.61px;width:7.4px;height:7.57px;background:rgb(229,230,232)"></div>
<div class="a " style="left:265.4px;top:476.61px;width:7.4px;height:7.57px;background:rgb(213,213,213)"></div>
<div class="a " style="left:272.8px;top:476.61px;width:7.4px;height:7.57px;background:rgb(217,215,213)"></div>
<div class="a " style="left:280.2px;top:476.61px;width:7.4px;height:7.57px;background:rgb(214,215,217)"></div>
<div class="a " style="left:287.6px;top:476.61px;width:7.4px;height:7.57px;background:rgb(213,213,211)"></div>
<div class="a " style="left:258px;top:484.18px;width:7.4px;height:7.57px;background:rgb(239,239,239)"></div>
<div class="a " style="left:265.4px;top:484.18px;width:7.4px;height:7.57px;background:rgb(243,241,239)"></div>
<div class="a " style="left:272.8px;top:484.18px;width:7.4px;height:7.57px;background:rgb(240,241,243)"></div>
<div class="a " style="left:280.2px;top:484.18px;width:7.4px;height:7.57px;background:rgb(239,239,237)"></div>
<div class="a " style="left:287.6px;top:484.18px;width:7.4px;height:7.57px;background:rgb(241,242,244)"></div>
<div class="a " style="left:258px;top:491.75px;width:7.4px;height:7.57px;background:rgb(253,251,249)"></div>
<div class="a " style="left:265.4px;top:491.75px;width:7.4px;height:7.57px;background:rgb(250,251,253)"></div>
<div class="a " style="left:272.8px;top:491.75px;width:7.4px;height:7.57px;background:rgb(249,249,247)"></div>
<div class="a " style="left:280.2px;top:491.75px;width:7.4px;height:7.57px;background:rgb(251,252,254)"></div>
<div class="a " style="left:287.6px;top:491.75px;width:7.4px;height:7.57px;background:rgb(249,249,249)"></div>
<div class="a " style="left:258px;top:499.32px;width:7.4px;height:7.57px;background:rgb(228,229,231)"></div>
<div class="a " style="left:265.4px;top:499.32px;width:7.4px;height:7.57px;background:rgb(213,213,211)"></div>
<div class="a " style="left:272.8px;top:499.32px;width:7.4px;height:7.57px;background:rgb(215,216,218)"></div>
<div class="a " style="left:280.2px;top:499.32px;width:7.4px;height:7.57px;background:rgb(213,213,213)"></div>
<div class="a " style="left:287.6px;top:499.32px;width:7.4px;height:7.57px;background:rgb(217,215,213)"></div>
<div class="a " style="left:258px;top:506.89px;width:7.4px;height:7.57px;background:rgb(251,251,249)"></div>
<div class="a " style="left:265.4px;top:506.89px;width:7.4px;height:7.57px;background:rgb(253,254,255)"></div>
<div class="a " style="left:272.8px;top:506.89px;width:7.4px;height:7.57px;background:rgb(251,251,251)"></div>
<div class="a " style="left:280.2px;top:506.89px;width:7.4px;height:7.57px;background:rgb(255,253,251)"></div>
<div class="a " style="left:287.6px;top:506.89px;width:7.4px;height:7.57px;background:rgb(252,253,255)"></div>
<div class="a " style="left:258px;top:514.46px;width:7.4px;height:7.57px;background:rgb(243,244,246)"></div>
<div class="a " style="left:265.4px;top:514.46px;width:7.4px;height:7.57px;background:rgb(241,241,241)"></div>
<div class="a " style="left:272.8px;top:514.46px;width:7.4px;height:7.57px;background:rgb(245,243,241)"></div>
<div class="a " style="left:280.2px;top:514.46px;width:7.4px;height:7.57px;background:rgb(242,243,245)"></div>
<div class="a " style="left:287.6px;top:514.46px;width:7.4px;height:7.57px;background:rgb(241,241,239)"></div>
<div class="a " style="left:258px;top:522.03px;width:7.4px;height:7.57px;background:rgb(225,225,225)"></div>
<div class="a " style="left:265.4px;top:522.03px;width:7.4px;height:7.57px;background:rgb(215,213,211)"></div>
<div class="a " style="left:272.8px;top:522.03px;width:7.4px;height:7.57px;background:rgb(212,213,215)"></div>
<div class="a " style="left:280.2px;top:522.03px;width:7.4px;height:7.57px;background:rgb(211,211,209)"></div>
<div class="a " style="left:287.6px;top:522.03px;width:7.4px;height:7.57px;background:rgb(213,214,216)"></div>
<div class="a " style="left:258px;top:529.6px;width:7.4px;height:7.57px;background:rgb(239,237,235)"></div>
<div class="a " style="left:265.4px;top:529.6px;width:7.4px;height:7.57px;background:rgb(236,237,239)"></div>
<div class="a " style="left:272.8px;top:529.6px;width:7.4px;height:7.57px;background:rgb(235,235,233)"></div>
<div class="a " style="left:280.2px;top:529.6px;width:7.4px;height:7.57px;background:rgb(237,238,240)"></div>
<div class="a " style="left:287.6px;top:529.6px;width:7.4px;height:7.57px;background:rgb(235,235,235)"></div>
<div class="a " style="left:53px;top:30px;width:136px;height:586px;background:#fff;border-right:1px solid #cdcdcd"></div>
<svg class="a" style="left:170.5px;top:39.5px" width="12" height="12" viewBox="0 0 12 12"><circle cx="5.8" cy="1.9" r="1.2" fill="none" stroke="#888" stroke-width="1"/><path d="M5.8 3V10.2M0.8 5.4Q1.4 10.2 5.8 10.2Q10.2 10.2 10.8 5.4" fill="none" stroke="#888" stroke-width="1.3"/></svg>
<div class="a" style="left:70.8px;top:67.3px;width:0;height:0;border-top:3.9px solid transparent;border-bottom:3.9px solid transparent;border-left:4.6px solid #aaa"></div>
<div class="a t" style="left:80.8px;top:65.5px;color:#666;font-size:8.4px">企业破产、企业上市合法</div>
<div class="a t" style="left:69.5px;top:75.5px;color:#666;font-size:8.4px">合规住房公积金信息核查</div>
<div class="a " style="left:65px;top:94.2px;width:111px;height:29.3px;background:#efefef;border-top:1px solid #dedede;border-bottom:1px solid #d5d5d5"></div>
<div class="a t" style="left:69px;top:103px;color:#666">增减员</div>
<div class="a " style="left:65px;top:151px;width:111px;height:1px;background:#dddddd"></div>
<div class="a " style="left:65px;top:180px;width:111px;height:1px;background:#dddddd"></div>
<div class="a " style="left:65px;top:209px;width:111px;height:1px;background:#dddddd"></div>
<div class="a " style="left:65px;top:237px;width:111px;height:1px;background:#dddddd"></div>
<div class="a " style="left:65px;top:266px;width:111px;height:1px;background:#dddddd"></div>
<div class="a " style="left:65px;top:294px;width:111px;height:1px;background:#dddddd"></div>
<div class="a " style="left:65px;top:323px;width:111px;height:1px;background:#dddddd"></div>
<div class="a t" style="left:69.4px;top:131px;color:#666">年度缴存基数申报</div>
<div class="a" style="left:71px;top:162.8px;width:0;height:0;border-top:3.9px solid transparent;border-bottom:3.9px solid transparent;border-left:4.6px solid #aaa"></div>
<div class="a t" style="left:81.4px;top:160px;color:#666">单位信息管理</div>
<div class="a" style="left:71px;top:191.3px;width:0;height:0;border-top:3.9px solid transparent;border-bottom:3.9px solid transparent;border-left:4.6px solid #aaa"></div>
<div class="a t" style="left:81.4px;top:188.5px;color:#666">汇补缴</div>
<div class="a t" style="left:69.4px;top:216.8px;color:#666">职工户籍采集</div>
<div class="a" style="left:71px;top:247.8px;width:0;height:0;border-top:3.9px solid transparent;border-bottom:3.9px solid transparent;border-left:4.6px solid #aaa"></div>
<div class="a t" style="left:81.4px;top:245px;color:#666">查询</div>
<div class="a t" style="left:69.4px;top:274px;color:#666">申请缓缴</div>
<div class="a t" style="left:69.4px;top:302.5px;color:#666">申请降低缴存比例</div>
<div class="a anno" style="left:1.9px;top:36px;width:43.7px;height:49.3px;"></div>
<div class="a anno" style="left:60.2px;top:93.4px;width:63.8px;height:28.6px;"></div>
<div class="a anno" style="left:512.4px;top:290px;width:72.5px;height:35.7px;"></div>
</body></html>
